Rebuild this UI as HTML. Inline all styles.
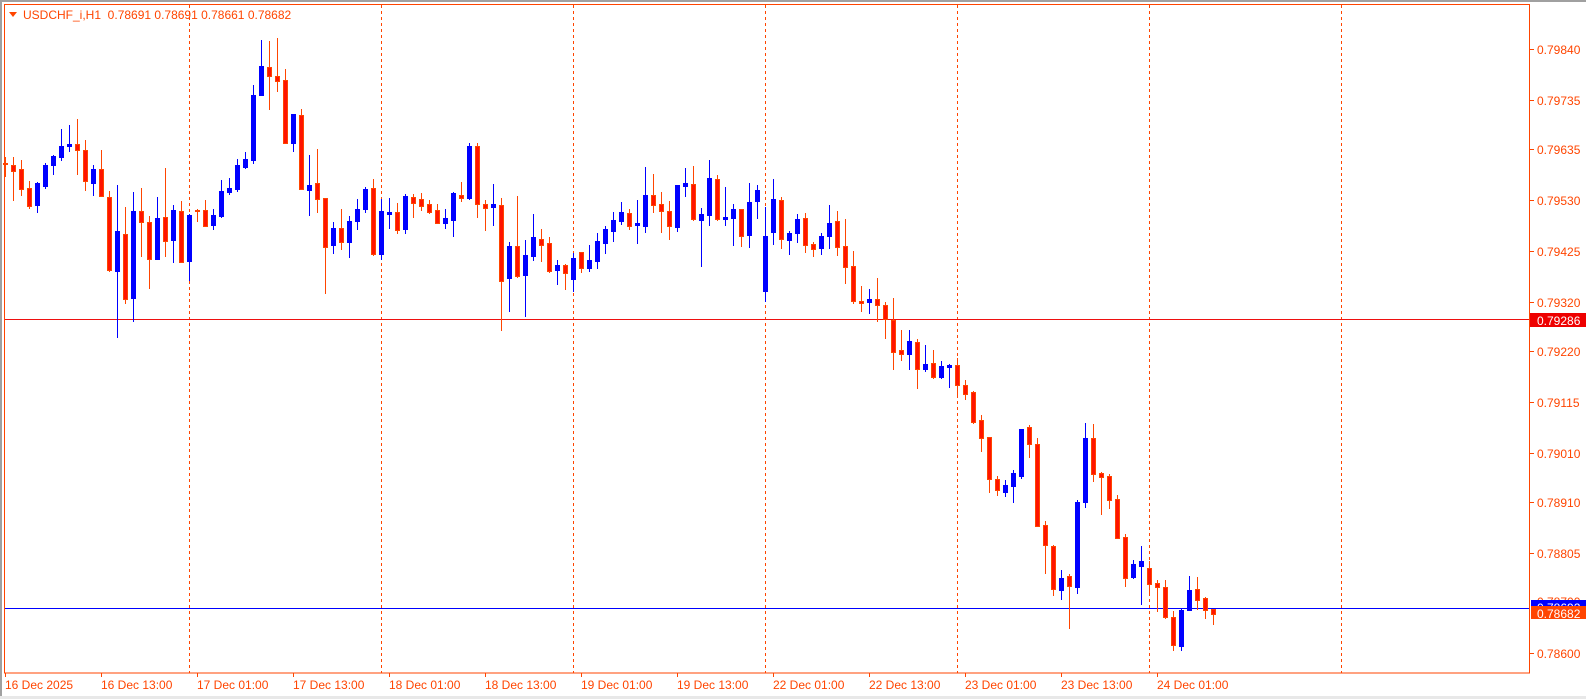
<!DOCTYPE html>
<html><head><meta charset="utf-8">
<style>
html,body{margin:0;padding:0;background:#fff;width:1586px;height:699px;overflow:hidden}
svg{display:block}
text{font-family:"Liberation Sans",sans-serif;font-size:12px}
</style></head>
<body>
<svg id="c" width="1586" height="699" viewBox="0 0 1586 699" xmlns="http://www.w3.org/2000/svg">
<rect x="0" y="0" width="1586" height="699" fill="#fff"/>
<rect x="0" y="0" width="1586" height="2" fill="#a0a0a0"/>
<rect x="0" y="0" width="2" height="699" fill="#a0a0a0"/>
<rect x="0" y="696" width="1586" height="3" fill="#e8e8e8"/>
<g stroke="#ff4500" stroke-width="1" stroke-dasharray="3,3">
<line x1="189.5" y1="5" x2="189.5" y2="673"/>
<line x1="381.5" y1="5" x2="381.5" y2="673"/>
<line x1="573.5" y1="5" x2="573.5" y2="673"/>
<line x1="765.5" y1="5" x2="765.5" y2="673"/>
<line x1="957.5" y1="5" x2="957.5" y2="673"/>
<line x1="1149.5" y1="5" x2="1149.5" y2="673"/>
<line x1="1341.5" y1="5" x2="1341.5" y2="673"/>
</g>
<line x1="5" y1="319.5" x2="1529" y2="319.5" stroke="#ee1010" stroke-width="1"/>
<line x1="5" y1="608.5" x2="1529" y2="608.5" stroke="#0000ff" stroke-width="1"/>
<g id="candles"></g>
<rect x="4.5" y="4.5" width="1525" height="668.5" fill="none" stroke="#ff4500" stroke-width="1"/>
<polygon points="9,12 17,12 13,17" fill="#ff4500"/>
<text x="23" y="19" fill="#ff4500">USDCHF_i,H1&#160;&#160;0.78691 0.78691 0.78661 0.78682</text>
<g stroke="#ff4500">
<line x1="1530" y1="49.5" x2="1534" y2="49.5"/><line x1="1530" y1="100.5" x2="1534" y2="100.5"/>
<line x1="1530" y1="149.5" x2="1534" y2="149.5"/><line x1="1530" y1="200.5" x2="1534" y2="200.5"/>
<line x1="1530" y1="251.5" x2="1534" y2="251.5"/><line x1="1530" y1="302.5" x2="1534" y2="302.5"/>
<line x1="1530" y1="351.5" x2="1534" y2="351.5"/><line x1="1530" y1="402.5" x2="1534" y2="402.5"/>
<line x1="1530" y1="453.5" x2="1534" y2="453.5"/><line x1="1530" y1="502.5" x2="1534" y2="502.5"/>
<line x1="1530" y1="553.5" x2="1534" y2="553.5"/><line x1="1530" y1="653.5" x2="1534" y2="653.5"/>
</g>
<g fill="#ff4500">
<text x="1537" y="54">0.79840</text><text x="1537" y="105">0.79735</text>
<text x="1537" y="154">0.79635</text><text x="1537" y="205">0.79530</text>
<text x="1537" y="256">0.79425</text><text x="1537" y="307">0.79320</text>
<text x="1537" y="356">0.79220</text><text x="1537" y="407">0.79115</text>
<text x="1537" y="458">0.79010</text><text x="1537" y="507">0.78910</text>
<text x="1537" y="558">0.78805</text><text x="1537" y="658">0.78600</text>
<text x="1537" y="606">0.78700</text>
</g>
<rect x="1530" y="313" width="56" height="14" fill="#ee0000"/>
<text x="1537" y="325" fill="#fff">0.79286</text>
<rect x="1531" y="600" width="55" height="8" fill="#0000ff"/>
<text x="1537" y="612" fill="#fff">0.78692</text>
<rect x="1531" y="606" width="55" height="13" fill="#ff4500"/>
<text x="1537" y="618" fill="#fff">0.78682</text>
<g stroke="#ff4500" id="ticks"></g>
<g fill="#ff4500">
<text x="5" y="689">16 Dec 2025</text>
<text x="101" y="689">16 Dec 13:00</text>
<text x="197" y="689">17 Dec 01:00</text>
<text x="293" y="689">17 Dec 13:00</text>
<text x="389" y="689">18 Dec 01:00</text>
<text x="485" y="689">18 Dec 13:00</text>
<text x="581" y="689">19 Dec 01:00</text>
<text x="677" y="689">19 Dec 13:00</text>
<text x="773" y="689">22 Dec 01:00</text>
<text x="869" y="689">22 Dec 13:00</text>
<text x="965" y="689">23 Dec 01:00</text>
<text x="1061" y="689">23 Dec 13:00</text>
<text x="1157" y="689">24 Dec 01:00</text>
</g>
</svg>
<script>
var D=[[0,0,157,163,164,176],[1,0,157,165,171,200],[2,0,160,169,189,195],[3,0,181,188,206,208],[4,1,182,183,205,212],[5,1,163,165,186,188],[6,1,155,156,165,174],[7,1,129,146,157,160],[8,1,125,144,146,151],[9,0,119,144,150,174],[10,0,140,150,181,190],[11,1,165,169,183,195],[12,0,150,169,196,196],[13,0,191,197,270,271],[14,1,185,231,271,337],[15,0,207,234,299,303],[16,1,192,211,298,321],[17,0,188,211,222,256],[18,0,216,222,259,288],[19,1,197,218,259,259],[20,0,168,217,241,256],[21,1,205,210,240,262],[22,0,201,211,262,262],[23,1,214,215,261,280],[24,0,209,210,211,221],[25,0,200,210,226,226],[26,1,209,215,225,229],[27,1,180,191,216,217],[28,1,178,188,192,194],[29,1,159,165,189,191],[30,1,152,159,167,168],[31,1,85,95,160,163],[32,1,40,66,95,95],[33,0,41,67,76,109],[34,0,38,76,81,91],[35,0,69,80,143,143],[36,1,114,114,143,151],[37,0,109,115,189,189],[38,1,155,185,190,215],[39,0,149,183,199,212],[40,0,198,198,247,293],[41,1,222,228,245,253],[42,0,209,228,242,249],[43,1,216,221,242,257],[44,1,199,209,221,229],[45,1,187,189,209,212],[46,0,179,188,254,255],[47,1,199,211,254,259],[48,1,198,212,214,228],[49,0,203,212,230,233],[50,1,194,196,229,233],[51,0,194,197,203,217],[52,0,193,199,206,210],[53,0,200,204,212,213],[54,0,204,210,223,223],[55,1,209,218,223,228],[56,1,192,193,220,236],[57,0,182,195,198,201],[58,1,143,146,198,199],[59,0,143,146,204,217],[60,0,200,204,208,230],[61,1,184,204,207,225],[62,0,198,205,281,330],[63,1,242,246,278,311],[64,0,196,246,276,277],[65,1,240,255,275,316],[66,1,214,237,256,260],[67,0,229,239,245,261],[68,0,237,243,271,272],[69,1,260,265,270,284],[70,0,264,265,273,289],[71,1,253,258,279,291],[72,0,252,252,268,272],[73,1,245,260,268,271],[74,1,233,241,261,268],[75,1,226,229,243,253],[76,1,212,220,231,241],[77,1,202,212,221,224],[78,0,209,213,226,229],[79,1,200,223,225,243],[80,1,167,195,226,232],[81,0,174,195,205,212],[82,0,192,204,211,232],[83,0,201,211,226,239],[84,1,185,185,227,231],[85,1,168,183,186,196],[86,0,166,184,219,220],[87,1,208,214,220,266],[88,1,160,178,215,225],[89,0,175,179,219,220],[90,1,187,217,219,225],[91,1,204,209,218,245],[92,0,209,209,236,246],[93,1,183,202,235,247],[94,1,185,190,201,218],[95,1,207,236,291,301],[96,1,179,199,232,244],[97,0,197,200,239,248],[98,1,231,233,240,254],[99,1,214,219,233,242],[100,0,213,218,245,252],[101,0,242,244,249,256],[102,1,233,236,248,254],[103,1,205,223,236,248],[104,0,211,221,247,255],[105,0,219,246,267,283],[106,0,251,266,301,303],[107,0,286,301,303,311],[108,1,289,299,302,313],[109,0,278,299,305,321],[110,0,302,305,319,338],[111,0,298,320,352,369],[112,0,330,350,354,360],[113,1,330,341,354,369],[114,0,339,342,369,388],[115,1,345,364,369,371],[116,0,350,363,377,378],[117,1,361,366,377,378],[118,1,364,365,367,387],[119,0,358,365,385,397],[120,0,380,385,394,399],[121,0,391,392,422,423],[122,0,415,420,438,451],[123,0,437,437,479,492],[124,0,476,479,490,495],[125,1,480,485,492,496],[126,1,470,473,486,502],[127,1,429,429,476,478],[128,0,425,427,444,457],[129,0,438,444,526,526],[130,0,521,525,545,573],[131,0,545,546,589,595],[132,1,570,578,590,599],[133,0,574,576,586,628],[134,1,500,502,587,593],[135,1,423,438,502,507],[136,0,424,438,474,481],[137,0,472,473,477,514],[138,0,474,476,500,508],[139,0,495,499,538,538],[140,0,534,537,578,586],[141,1,560,564,577,578],[142,1,546,561,566,604],[143,0,561,568,584,595],[144,0,580,583,587,611],[145,0,580,587,617,618],[146,0,611,617,645,650],[147,1,609,610,646,650],[148,1,576,590,610,610],[149,0,577,589,600,609],[150,0,597,598,610,618],[151,0,609,609,614,624]];
var g=document.getElementById("candles"),h="";
D.forEach(function(c){var x=Math.round(5.3+8*c[0]),bull=c[1]==1,col=bull?"#0000ff":"#ff4500";
h+='<line x1="'+(x+0.5)+'" y1="'+c[2]+'" x2="'+(x+0.5)+'" y2="'+(c[5]+1)+'" stroke="'+col+'" stroke-width="1"/>';
var hh=Math.max(c[4]-c[3],1);
if(bull){h+='<rect x="'+(x-2)+'" y="'+c[3]+'" width="5" height="'+(hh+1)+'" fill="#0000ff"/>';}
else{h+='<rect x="'+(x-1.5)+'" y="'+(c[3]+0.5)+'" width="4" height="'+hh+'" fill="#ff1400" stroke="#ff4500" stroke-width="1"/>';}
});
g.innerHTML=h;
var t="";for(var k=0;k<13;k++){var x=Math.round(5.3+96*k)+0.5;t+='<line x1="'+x+'" y1="673" x2="'+x+'" y2="677"/>';}
document.getElementById("ticks").innerHTML=t;
</script>
</body></html>
